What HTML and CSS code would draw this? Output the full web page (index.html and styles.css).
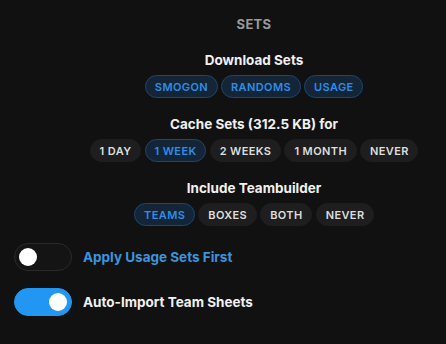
FILE: index.html
```html
<!DOCTYPE html>
<html>
<head>
<meta charset="utf-8">
<link rel="stylesheet" href="styles.css">
</head>
<body>
<div class="panel">
  <div class="title">SETS</div>
  <div class="group">
    <div class="label">Download Sets</div>
    <div class="pills">
      <span class="pill active">SMOGON</span>
      <span class="pill active">RANDOMS</span>
      <span class="pill active">USAGE</span>
    </div>
  </div>
  <div class="group">
    <div class="label">Cache Sets (312.5 KB) for</div>
    <div class="pills">
      <span class="pill">1 DAY</span>
      <span class="pill active">1 WEEK</span>
      <span class="pill">2 WEEKS</span>
      <span class="pill">1 MONTH</span>
      <span class="pill">NEVER</span>
    </div>
  </div>
  <div class="group">
    <div class="label">Include Teambuilder</div>
    <div class="pills">
      <span class="pill active">TEAMS</span>
      <span class="pill">BOXES</span>
      <span class="pill">BOTH</span>
      <span class="pill">NEVER</span>
    </div>
  </div>
  <div class="toggles">
    <div class="toggle-row">
      <span class="switch"><span class="knob"></span></span>
      <span class="toggle-label blue">Apply Usage Sets First</span>
    </div>
    <div class="toggle-row">
      <span class="switch on"><span class="knob"></span></span>
      <span class="toggle-label">Auto-Import Team Sheets</span>
    </div>
  </div>
</div>
</body>
</html>
```
FILE: styles.css
```css
html, body {
  margin: 0;
  padding: 0;
  background: #111111;
}
body {
  font-family: Inter, "Noto Sans", sans-serif;
  color: #eeeeee;
  width: 446px;
  height: 344px;
  overflow: hidden;
}
.panel {
  display: flex;
  flex-direction: column;
  padding-top: 15px;
}
.title {
  margin-left: 62px;
  text-align: center;
  font-size: 13px;
  font-weight: 700;
  letter-spacing: 0.3px;
  color: #9a9a9a;
  line-height: 18px;
}
.group {
  margin-left: 62px;
  display: flex;
  flex-direction: column;
  align-items: center;
}
.label {
  font-size: 13.5px;
  font-weight: 700;
  color: #f0f0f0;
  line-height: 18px;
  margin-top: 17px;
  margin-bottom: 6px;
}
.title + .group .label { margin-top: 18px; }
.pills {
  display: flex;
  gap: 3.5px;
}
.pill {
  box-sizing: border-box;
  height: 23px;
  display: flex;
  align-items: center;
  padding: 0 8.5px 0 9px;
  border-radius: 12px;
  font-size: 11px;
  font-weight: 600;
  letter-spacing: 0.4px;
  color: #dedede;
  background: #1e1e1e;
  border: 1px solid #1e1e1e;
}
.pill.active {
  background: #142538;
  border-color: #1d4670;
  color: #2e8ee6;
}
.toggles {
  display: flex;
  flex-direction: column;
  gap: 17px;
  padding-left: 14px;
  margin-top: 17px;
}
.toggle-row {
  display: flex;
  align-items: center;
  gap: 11px;
}
.switch {
  box-sizing: border-box;
  width: 58px;
  height: 28px;
  border-radius: 14px;
  background: #141414;
  border: 1px solid #2a2a2a;
  display: flex;
  align-items: center;
  padding: 0 4px;
}
.switch.on {
  background: #2196f3;
  border-color: #2196f3;
  justify-content: flex-end;
}
.knob {
  width: 18px;
  height: 18px;
  border-radius: 50%;
  background: #ffffff;
}
.toggle-label {
  font-size: 13.5px;
  font-weight: 700;
  color: #f0f0f0;
}
.toggle-label.blue {
  color: #3d94dc;
}
```
